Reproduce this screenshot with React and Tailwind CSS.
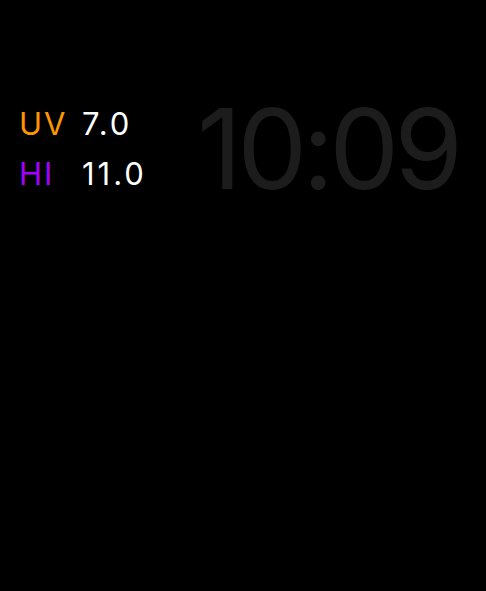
import React from 'react';

const READINGS = [
  { label: 'UV', value: '7.0', color: 'text-[#ff9500]' },
  { label: 'HI', value: '11.0', color: 'text-[#a200ff]' },
];

export default function App() {
  return (
    <div className="h-[591px] w-[486px] overflow-hidden bg-black font-['Inter',sans-serif]">
      <div className="flex items-start pt-[84px]">
        <div className="flex flex-col gap-[14px] pl-[19px] pt-[22px]">
          {READINGS.map((r) => (
            <div key={r.label} className="flex items-center text-[31px] leading-[36px]">
              <span className={`w-[63px] tracking-[2px] ${r.color}`}>{r.label}</span>
              <span className="tracking-[3px] text-white">{r.value}</span>
            </div>
          ))}
        </div>
        <div className="ml-auto -mt-[2px] pr-[28px] text-[111px] leading-[134px] tracking-[-5px] text-[#1c1c1c]">
          10:09
        </div>
      </div>
    </div>
  );
}
